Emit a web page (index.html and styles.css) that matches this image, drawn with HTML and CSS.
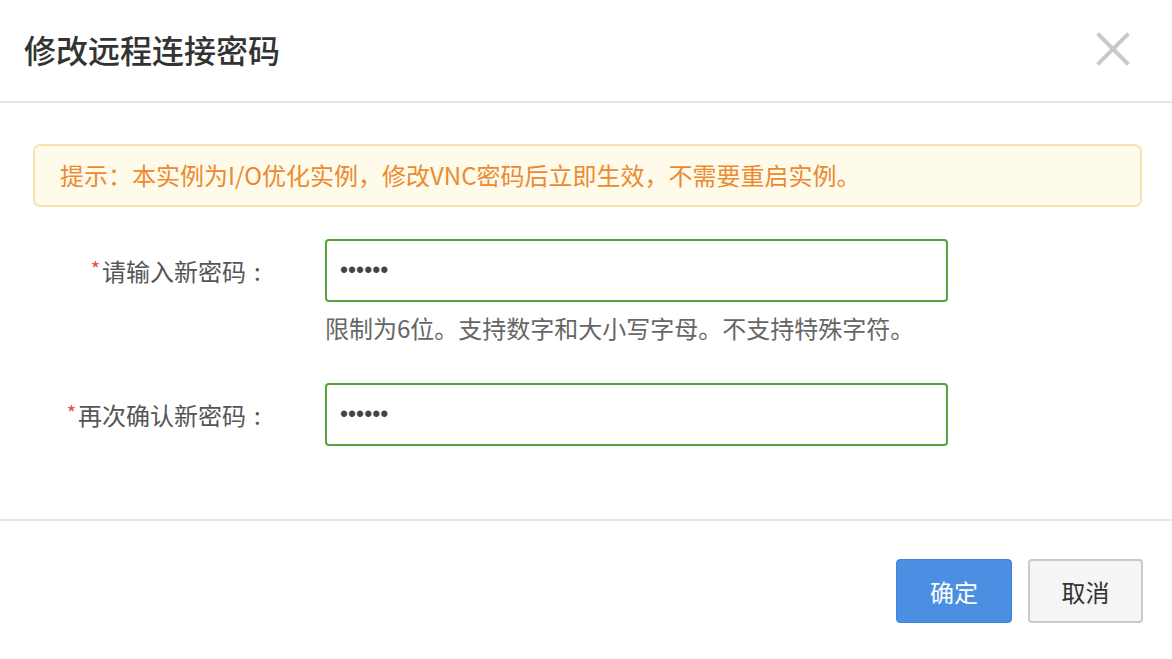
FILE: index.html
```html
<!DOCTYPE html>
<html lang="zh-CN">
<head>
<meta charset="utf-8">
<title>修改远程连接密码</title>
<link rel="stylesheet" href="styles.css">
</head>
<body>
<div class="dialog">
  <div class="dialog-header">
    <h1 class="dialog-title">修改远程连接密码</h1>
    <button class="close-btn" aria-label="关闭">
      <svg width="34" height="34" viewBox="0 0 34 34"><path d="M3 3 L31 31 M31 3 L3 31" stroke="#c9c9c9" stroke-width="4" stroke-linecap="square"/></svg>
    </button>
  </div>
  <div class="dialog-body">
    <div class="alert">提示：本实例为I/O优化实例，修改VNC密码后立即生效，不需要重启实例。</div>
    <div class="form-row">
      <label class="form-label"><span class="req">*</span>请输入新密码<span class="colon">:</span></label>
      <div class="form-field">
        <div class="input">••••••</div>
        <div class="help">限制为6位。支持数字和大小写字母。不支持特殊字符。</div>
      </div>
    </div>
    <div class="form-row second">
      <label class="form-label"><span class="req">*</span>再次确认新密码<span class="colon">:</span></label>
      <div class="form-field">
        <div class="input">••••••</div>
      </div>
    </div>
  </div>
  <div class="dialog-footer">
    <button class="btn btn-primary">确定</button>
    <button class="btn btn-default">取消</button>
  </div>
</div>
</body>
</html>
```
FILE: styles.css
```css
* { box-sizing: border-box; }
html, body { margin: 0; padding: 0; background: #fff; }
body {
  font-family: "Noto Sans CJK SC", "Noto Sans", sans-serif;
  color: #333;
}
.dialog { width: 1172px; height: 659px; background: #fff; }
.dialog-header {
  height: 103px;
  border-bottom: 2px solid #e6e6e6;
  display: flex;
  align-items: center;
  justify-content: space-between;
  padding: 0 42px 4px 24px;
}
.dialog-title {
  margin: 0;
  font-size: 32px;
  font-weight: 500;
  color: #333;
}
.close-btn {
  border: none;
  background: none;
  padding: 0;
  width: 34px;
  height: 34px;
  display: flex;
  cursor: pointer;
}
.dialog-body { padding: 41px 30px 0 33px; height: 418px; border-bottom: 2px solid #e6e6e6; }
.alert {
  height: 63px;
  background: #fffbea;
  border: 2px solid #fae2b0;
  border-radius: 7px;
  color: #ec8a31;
  font-size: 24px;
  display: flex;
  align-items: center;
  padding-left: 25px;
  padding-bottom: 2px;
}
.form-row { display: flex; margin-top: 32px; }
.form-row.second { margin-top: 40px; }
.form-label {
  width: 292px;
  height: 63px;
  display: flex;
  align-items: center;
  justify-content: flex-end;
  padding-right: 63px;
  font-size: 24px;
  color: #555;
}
.colon { margin-left: 8px; width: 8px; }
.req { color: #e84b3c; font-size: 20px; margin-top: -5px; margin-right: 2px; }
.form-field { display: flex; flex-direction: column; }
.input {
  width: 623px;
  height: 63px;
  border: 2px solid #52a33a;
  border-radius: 4px;
  padding-left: 13px;
  display: flex;
  align-items: center;
  font-family: "Liberation Sans", Arial, sans-serif;
  font-size: 23px;
  color: #444;
}
.help {
  margin-top: 11px;
  font-size: 24px;
  color: #666;
  line-height: 30px;
}
.dialog-footer {
  display: flex;
  justify-content: flex-end;
  gap: 16px;
  padding: 38px 29px 0 0;
}
.btn {
  height: 64px;
  font-family: inherit;
  font-size: 24px;
  border-radius: 4px;
  cursor: pointer;
}
.btn-primary {
  width: 116px;
  background: #4a8fe1;
  border: 1px solid #3f84d6;
  color: #fff;
}
.btn-default {
  width: 115px;
  background: #f5f5f5;
  border: 2px solid #cacaca;
  color: #333;
}
```
